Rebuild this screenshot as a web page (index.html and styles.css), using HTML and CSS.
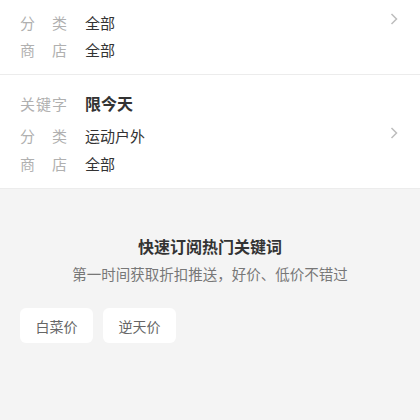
FILE: index.html
```html
<!DOCTYPE html>
<html lang="zh-CN">
<head>
<meta charset="utf-8">
<link rel="stylesheet" href="styles.css">
</head>
<body>
<div class="list">
  <div class="card first">
    <div class="info">
      <div class="row"><span class="label">分　类</span><span class="value">全部</span></div>
      <div class="row"><span class="label">商　店</span><span class="value">全部</span></div>
    </div>
    <svg class="chev" width="8" height="12" viewBox="0 0 8 12"><path d="M1.5 1 L6.5 6 L1.5 11" fill="none" stroke="#bdbdbd" stroke-width="1.5"/></svg>
  </div>
  <div class="card">
    <div class="info">
      <div class="row key"><span class="label">关键字</span><span class="value">限今天</span></div>
      <div class="row"><span class="label">分　类</span><span class="value">运动户外</span></div>
      <div class="row"><span class="label">商　店</span><span class="value">全部</span></div>
    </div>
    <svg class="chev" width="8" height="12" viewBox="0 0 8 12"><path d="M1.5 1 L6.5 6 L1.5 11" fill="none" stroke="#bdbdbd" stroke-width="1.5"/></svg>
  </div>
</div>
<div class="promo">
  <div class="title">快速订阅热门关键词</div>
  <div class="sub">第一时间获取折扣推送，好价、低价不错过</div>
  <div class="tags">
    <span class="tag">白菜价</span>
    <span class="tag">逆天价</span>
  </div>
</div>
</body>
</html>
```
FILE: styles.css
```css
html, body {
  margin: 0;
  padding: 0;
  background: #f4f4f4;
  font-family: "Noto Sans CJK SC", "Noto Sans", sans-serif;
  overflow: hidden;
}
.card {
  background: #fff;
  border-bottom: 1px solid #ececec;
  display: flex;
  align-items: center;
  padding: 14px 22px 11px 20px;
}
.card.first {
  padding-top: 9px;
  align-items: flex-start;
}
.card.first .chev {
  margin-top: 4px;
}
.info {
  flex: 1;
  display: flex;
  flex-direction: column;
}
.row {
  display: flex;
  height: 28px;
  align-items: center;
  font-size: 15px;
}
.first .row {
  height: 27px;
}
.row.key {
  margin-bottom: 4px;
}
.label {
  width: 65px;
  color: #b0b0b0;
  letter-spacing: 1px;
  white-space: pre;
}
.value {
  color: #333;
}
.key .value {
  font-size: 16px;
  font-weight: 700;
}
.chev {
  display: block;
}
.promo {
  padding: 46px 20px 0;
  display: flex;
  flex-direction: column;
  align-items: center;
}
.title {
  font-size: 16px;
  font-weight: 700;
  color: #333;
  line-height: 22px;
}
.sub {
  font-size: 14.5px;
  color: #777;
  line-height: 22px;
  margin-top: 6px;
}
.tags {
  align-self: stretch;
  display: flex;
  gap: 10px;
  margin-top: 23px;
}
.tag {
  width: 73px;
  height: 35px;
  background: #fff;
  border-radius: 6px;
  display: flex;
  align-items: center;
  justify-content: center;
  font-size: 14px;
  color: #666;
}
```
